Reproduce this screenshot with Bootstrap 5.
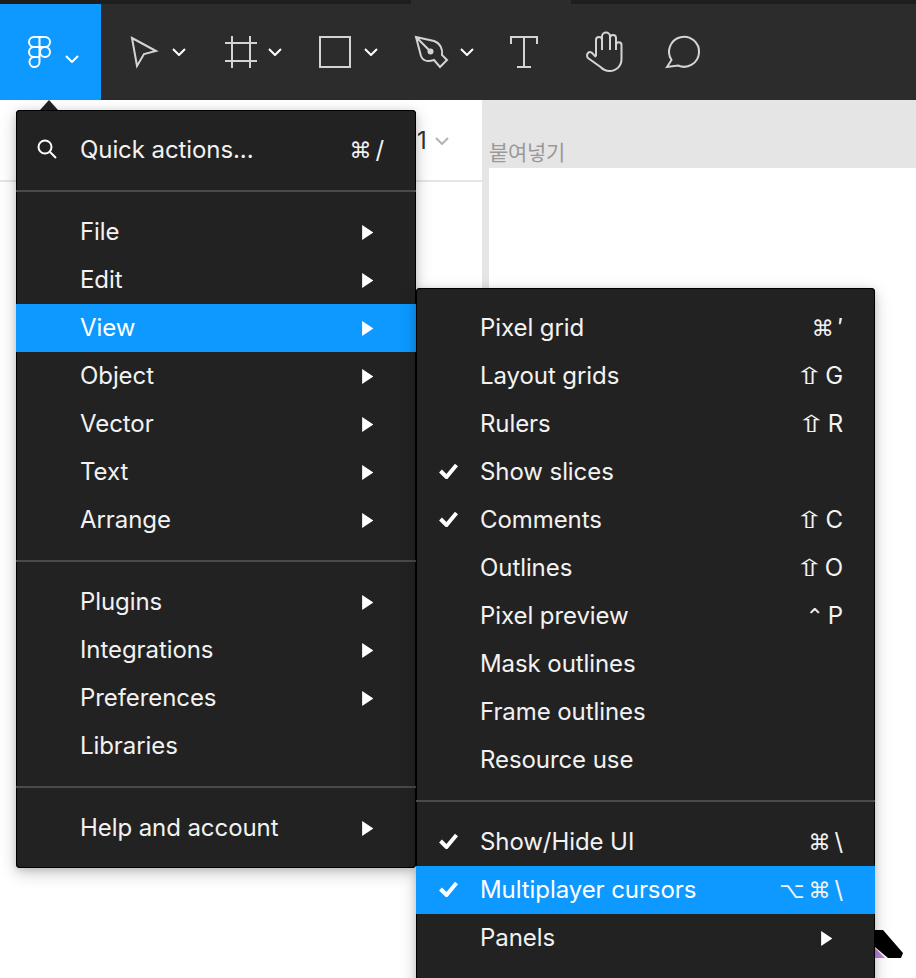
<!DOCTYPE html>
<html lang="en">
<head>
<meta charset="utf-8">
<title>Figma menu</title>
<link href="https://cdn.jsdelivr.net/npm/bootstrap@5.3.0/dist/css/bootstrap.min.css" rel="stylesheet">
<style>
html,body{height:100%;overflow:hidden;background:#fff}
body{font-family:"Inter","Noto Sans",sans-serif}
.app-shell{position:relative;width:916px;height:978px;overflow:hidden}
.top-strip{height:4px;background:#1e1e1e}
.top-strip-tab{width:160px;margin-left:411px;height:4px;background:#2c2c2c}
.tool-bar{height:96px;background:#2c2c2c}
.main-btn{width:101px;background:#0d99ff;padding-left:28px;gap:14px}
.main-chev{margin-top:13px}
.tool-row{margin-left:27px}
.tool-wide{width:96px;gap:12px}
.tool-last{width:92px}
.tool-plain{width:80px}
.tool-ico{width:32px;height:32px;display:block;fill:none;stroke:#d4d4d4;stroke-width:2;overflow:visible}
.tool-hand{width:37px;height:40px;margin-left:-2px}
.tool-bubble{width:36px;margin-left:-2px}
.tool-chev{width:14px;height:8px;display:block;fill:none;stroke:#fff;stroke-width:2}
.work-area{height:878px}
.left-panel{width:482px;height:100%}
.panel-head{height:82px;border-bottom:2px solid #e5e5e5;padding-left:417px;padding-top:26px;color:#333;font-size:24px;line-height:30px;gap:8px}
.panel-chev{width:14px;height:8px;margin-top:11px;fill:none;stroke:#b3b3b3;stroke-width:2}
.right-panel{background:#e5e5e5;padding-left:7px}
.paste-label{height:68px;padding-top:37px;font-family:"Noto Sans CJK KR","Noto Sans",sans-serif;font-size:21px;line-height:28px;color:#999;letter-spacing:-.3px}
.paste-canvas{background:#fff}
.fig-menu{position:absolute;display:block;background:#222;border:0;border-radius:4px;padding:16px 0;margin:0;min-width:0;box-shadow:inset 0 0 0 1px #000,0 2px 7px rgba(0,0,0,.15),0 5px 17px rgba(0,0,0,.2)}
.fig-main{left:16px;top:110px;width:400px;height:758px}
.fig-sub{left:416px;top:288px;width:459px;height:720px}
.fig-caret{position:absolute;left:40px;top:100px;width:0;height:0;border-left:9px solid transparent;border-right:9px solid transparent;border-bottom:10px solid #222}
.fig-item{height:48px;padding:0 0 0 64px;color:#f2f2f2;font-size:24px;line-height:48px;letter-spacing:-.08px;position:relative;background:transparent}
.fig-item:hover{color:#f2f2f2;background:transparent}
.fig-item.is-on,.fig-item.is-on:hover{background:#0d99ff;color:#fff}
.fig-rule{margin:16px 0;height:2px;border:0;opacity:1;background:#4a4a4a}
.fig-arrow{position:absolute;right:43px;top:16.500px;width:11.500px;height:15px;fill:#fff}
.fig-keys{margin-left:auto;padding-right:32px;font-size:24px;color:#f2f2f2;font-family:"Inter","DejaVu Sans",sans-serif;white-space:nowrap}
.fig-sym{font-family:"DejaVu Sans",sans-serif;font-size:22px;margin-right:4px}
.fig-shift{display:inline-block;font-size:23px;transform:scaleX(1.55);transform-origin:100% 50%;margin-right:1px}
.fig-check{position:absolute;left:23px;top:15px;width:19px;height:16px;fill:none;stroke:#fff;stroke-width:4}
.fig-search{position:absolute;left:21px;top:13px;width:20px;height:20px;fill:none;stroke:#fff;stroke-width:2}
.cursor-bit{position:absolute;left:875px;top:930px;width:28px;height:28px}
</style>
</head>
<body>
<div class="app-shell">
  <div class="top-strip"><div class="top-strip-tab"></div></div>
  <div class="tool-bar d-flex">
    <div class="main-btn d-flex align-items-center">
      <svg width="23" height="32" viewBox="0 0 23 32" fill="none" stroke="#fff" stroke-width="2"><path d="M11.500 1H6a5 5 0 0 0 0 10h5.500zM11.500 1H17a5 5 0 0 1 0 10h-5.500zM11.500 11H6a5 5 0 0 0 0 10h5.500zM11.500 21H6a5 5 0 1 0 5.500 5z"/><circle cx="17" cy="16" r="5"/></svg>
      <svg class="tool-chev main-chev" viewBox="0 0 14 8"><path d="M1 1l6 6 6-6"/></svg>
    </div>
    <div class="tool-row d-flex">
      <div class="tool-wide d-flex align-items-center">
        <svg class="tool-ico" viewBox="0 0 32 32"><path d="M4 2l24 13-12 3-7 12z"/></svg>
        <svg class="tool-chev" viewBox="0 0 14 8"><path d="M1 1l6 6 6-6"/></svg>
      </div>
      <div class="tool-wide d-flex align-items-center">
        <svg class="tool-ico" viewBox="0 0 32 32"><path d="M1 7h32M1 25h32M8 0v32M26 0v32"/></svg>
        <svg class="tool-chev" viewBox="0 0 14 8"><path d="M1 1l6 6 6-6"/></svg>
      </div>
      <div class="tool-wide d-flex align-items-center">
        <svg class="tool-ico" viewBox="0 0 32 32"><path d="M0 1h30v30H0z"/></svg>
        <svg class="tool-chev" viewBox="0 0 14 8"><path d="M1 1l6 6 6-6"/></svg>
      </div>
      <div class="tool-wide tool-last d-flex align-items-center">
        <svg class="tool-ico" viewBox="0 0 32 32"><path d="M0 1L18 5C24 7 27 13 26 19L31 24 24 31 18 24C12 26 7 25 5 20zM0 1L14 15"/><circle cx="14.500" cy="15.500" r="3" fill="#d4d4d4" stroke="none"/></svg>
        <svg class="tool-chev" viewBox="0 0 14 8"><path d="M1 1l6 6 6-6"/></svg>
      </div>
      <div class="tool-plain d-flex align-items-center">
        <svg class="tool-ico" viewBox="0 0 32 32"><path d="M3 8V1h26v7M16 1v30M9 31h14"/></svg>
      </div>
      <div class="tool-plain d-flex align-items-center">
        <svg class="tool-ico tool-hand" viewBox="0 0 37 40"><path d="M10 24V8a3 3 0 0 1 6 0V18M16 8V4.500a4 4 0 0 1 8 0V18M24 6a3 3 0 0 1 6 0V18M30 13a2.750 2.750 0 0 1 5.500 0V27c0 7-5 12-12 12-4 0-7-2-9-4L2 26c-1.500-1.500-1-4 0-5 1.500-1.500 4-1 5 1l3 3"/></svg>
      </div>
      <div class="tool-plain d-flex align-items-center">
        <svg class="tool-ico tool-bubble" viewBox="0 0 36 32"><path d="M1 31L5.500 24A15 15 0 1 1 12 29.500z"/></svg>
      </div>
    </div>
  </div>
  <div class="work-area d-flex">
    <div class="left-panel">
      <div class="panel-head d-flex align-items-start">
        <span>1</span>
        <svg class="panel-chev" viewBox="0 0 14 8"><path d="M1 1l6 6 6-6"/></svg>
      </div>
    </div>
    <div class="right-panel flex-grow-1 d-flex flex-column">
      <div class="paste-label">붙여넣기</div>
      <div class="paste-canvas flex-grow-1"></div>
    </div>
  </div>

  <svg class="cursor-bit" viewBox="0 0 28 28"><path d="M0 0h8l20 23-2 5H13L0 17z" fill="#000"/><path d="M0 18l10 10H0z" fill="#c27fdc"/></svg>

  <div class="fig-caret"></div>
  <div class="dropdown-menu fig-menu fig-main">
    <a class="dropdown-item fig-item d-flex"><svg class="fig-search" viewBox="0 0 20 20"><circle cx="8" cy="8" r="6.500"/><path d="M13 13l6 6"/></svg>Quick actions...<span class="fig-keys"><span class="fig-sym">⌘</span>/</span></a>
    <hr class="dropdown-divider fig-rule">
    <a class="dropdown-item fig-item">File<svg class="fig-arrow" viewBox="0 0 12 16"><path d="M0 0l12 8-12 8z"/></svg></a>
    <a class="dropdown-item fig-item">Edit<svg class="fig-arrow" viewBox="0 0 12 16"><path d="M0 0l12 8-12 8z"/></svg></a>
    <a class="dropdown-item fig-item is-on">View<svg class="fig-arrow" viewBox="0 0 12 16"><path d="M0 0l12 8-12 8z"/></svg></a>
    <a class="dropdown-item fig-item">Object<svg class="fig-arrow" viewBox="0 0 12 16"><path d="M0 0l12 8-12 8z"/></svg></a>
    <a class="dropdown-item fig-item">Vector<svg class="fig-arrow" viewBox="0 0 12 16"><path d="M0 0l12 8-12 8z"/></svg></a>
    <a class="dropdown-item fig-item">Text<svg class="fig-arrow" viewBox="0 0 12 16"><path d="M0 0l12 8-12 8z"/></svg></a>
    <a class="dropdown-item fig-item">Arrange<svg class="fig-arrow" viewBox="0 0 12 16"><path d="M0 0l12 8-12 8z"/></svg></a>
    <hr class="dropdown-divider fig-rule">
    <a class="dropdown-item fig-item">Plugins<svg class="fig-arrow" viewBox="0 0 12 16"><path d="M0 0l12 8-12 8z"/></svg></a>
    <a class="dropdown-item fig-item">Integrations<svg class="fig-arrow" viewBox="0 0 12 16"><path d="M0 0l12 8-12 8z"/></svg></a>
    <a class="dropdown-item fig-item">Preferences<svg class="fig-arrow" viewBox="0 0 12 16"><path d="M0 0l12 8-12 8z"/></svg></a>
    <a class="dropdown-item fig-item">Libraries</a>
    <hr class="dropdown-divider fig-rule">
    <a class="dropdown-item fig-item">Help and account<svg class="fig-arrow" viewBox="0 0 12 16"><path d="M0 0l12 8-12 8z"/></svg></a>
  </div>

  <div class="dropdown-menu fig-menu fig-sub">
    <a class="dropdown-item fig-item d-flex">Pixel grid<span class="fig-keys"><span class="fig-sym">⌘</span>′</span></a>
    <a class="dropdown-item fig-item d-flex">Layout grids<span class="fig-keys"><span class="fig-sym fig-shift">⇧</span>G</span></a>
    <a class="dropdown-item fig-item d-flex">Rulers<span class="fig-keys"><span class="fig-sym fig-shift">⇧</span>R</span></a>
    <a class="dropdown-item fig-item d-flex"><svg class="fig-check" viewBox="0 0 18 16"><path d="M1 8l6 6L17 2"/></svg>Show slices</a>
    <a class="dropdown-item fig-item d-flex"><svg class="fig-check" viewBox="0 0 18 16"><path d="M1 8l6 6L17 2"/></svg>Comments<span class="fig-keys"><span class="fig-sym fig-shift">⇧</span>C</span></a>
    <a class="dropdown-item fig-item d-flex">Outlines<span class="fig-keys"><span class="fig-sym fig-shift">⇧</span>O</span></a>
    <a class="dropdown-item fig-item d-flex">Pixel preview<span class="fig-keys"><span class="fig-sym">⌃</span>P</span></a>
    <a class="dropdown-item fig-item">Mask outlines</a>
    <a class="dropdown-item fig-item">Frame outlines</a>
    <a class="dropdown-item fig-item">Resource use</a>
    <hr class="dropdown-divider fig-rule">
    <a class="dropdown-item fig-item d-flex"><svg class="fig-check" viewBox="0 0 18 16"><path d="M1 8l6 6L17 2"/></svg>Show/Hide UI<span class="fig-keys"><span class="fig-sym">⌘</span>\</span></a>
    <a class="dropdown-item fig-item is-on d-flex"><svg class="fig-check" viewBox="0 0 18 16"><path d="M1 8l6 6L17 2"/></svg>Multiplayer cursors<span class="fig-keys"><span class="fig-sym">⌥</span><span class="fig-sym">⌘</span>\</span></a>
    <a class="dropdown-item fig-item">Panels<svg class="fig-arrow" viewBox="0 0 12 16"><path d="M0 0l12 8-12 8z"/></svg></a>
  </div>
</div>
<script src="https://cdn.jsdelivr.net/npm/bootstrap@5.3.0/dist/js/bootstrap.bundle.min.js"></script>
</body>
</html>
